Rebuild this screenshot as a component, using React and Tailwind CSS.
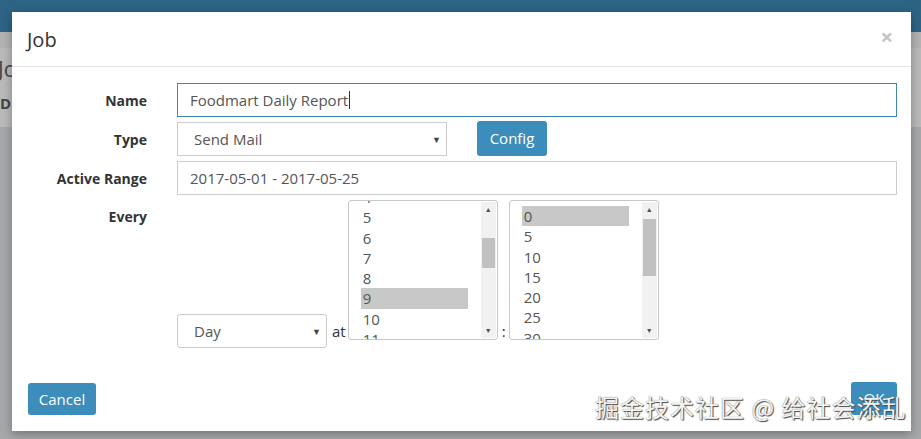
import React from 'react';

const hours = ['4', '5', '6', '7', '8', '9', '10', '11'];
const minutes = ['0', '5', '10', '15', '20', '25', '30'];

function Caret() {
    return <span className="text-[9px] text-[#444] leading-none">▼</span>;
}

function ListBox({ items, selected, offset, thumbTop, thumbHeight }) {
    return (
        <div className="relative w-[150px] h-[140px] border border-[#c8c8c8] rounded-[3px] bg-white overflow-hidden">
            <div className="absolute left-[12px] w-[107px]" style={{ top: offset }}>
                {items.map(item => (
                    <div key={item} className={`h-[20.3px] leading-[20px] pl-[2px] text-[15px] text-[#555] ${item === selected ? 'bg-[#c8c8c8]' : ''}`}>
                        {item}
                    </div>
                ))}
            </div>
            {/* scrollbar */}
            <div className="absolute right-[1px] top-[1px] bottom-[1px] w-[15px] bg-[#f1f1f1] flex flex-col items-center">
                <span className="text-[7px] text-[#505050] leading-none mt-[4px]">▲</span>
                <div className="absolute left-[1px] w-[13px] bg-[#c1c1c1]" style={{ top: thumbTop, height: thumbHeight }} />
                <span className="absolute bottom-[4px] text-[7px] text-[#505050] leading-none">▼</span>
            </div>
        </div>
    );
}

export default function App() {
    return (
        <div className="relative w-[921px] h-[439px] overflow-hidden bg-[#a6a7a9]" style={{ fontFamily: '"Open Sans", "Noto Sans", sans-serif' }}>
            {/* page behind the modal */}
            <div className="h-[32px] bg-[#2d6484]" />
            <div className="h-[16px] bg-[#b2b2b2]" />
            <div className="h-[79px] bg-[#b9b9b9] text-[#444]">
                <div className="text-[21px] leading-none pt-[11px] -ml-[2px]">Jo</div>
                <div className="text-[15px] font-bold leading-none mt-[16px]">D</div>
            </div>

            {/* modal */}
            <div className="absolute left-[12px] top-[12px] w-[899px] h-[419px] bg-white shadow-[0_3px_9px_rgba(0,0,0,0.3)] flex flex-col">
                <div className="h-[55px] border-b border-[#e5e5e5] flex items-center justify-between px-[15px]">
                    <h4 className="text-[20px] text-[#333] leading-none mt-[1px]">Job</h4>
                    <span className="text-[22px] font-bold text-[#c4c4c4] leading-none mr-[3px] -mt-[6px]">×</span>
                </div>

                <div className="pt-[16px] pr-[14px] flex flex-col gap-[5px] text-[#333]">
                    <div className="flex items-center">
                        <label className="w-[135px] text-right font-bold text-[14px]">Name</label>
                        <div className="ml-[30px] flex-1 h-[34px] border border-[#3f87ad] flex items-center px-[12px] text-[15px] text-[#555]">
                            Foodmart Daily Report<span className="w-px h-[18px] bg-[#333] ml-[1px]" />
                        </div>
                    </div>
                    <div className="flex items-center">
                        <label className="w-[135px] text-right font-bold text-[14px]">Type</label>
                        <div className="ml-[30px] w-[270px] h-[34px] border border-[#ccc] flex items-center justify-between pl-[16px] pr-[5px] text-[15px] text-[#555]">
                            <span>Send Mail</span>
                            <Caret />
                        </div>
                        <button className="ml-[30px] w-[70px] h-[35px] -mt-[1px] rounded-[3px] bg-[#3c8dbc] text-white text-[15px]">Config</button>
                    </div>
                    <div className="flex items-center">
                        <label className="w-[135px] text-right font-bold text-[14px]">Active Range</label>
                        <div className="ml-[30px] flex-1 h-[34px] border border-[#ccc] flex items-center px-[12px] text-[15px] text-[#555]">
                            2017-05-01 - 2017-05-25
                        </div>
                    </div>
                    <div className="flex items-start">
                        <label className="w-[135px] text-right font-bold text-[14px] mt-[6px]">Every</label>
                        <div className="ml-[30px] w-[150px] h-[34px] mt-[114px] border border-[#ccc] rounded-[3px] flex items-center justify-between pl-[16px] pr-[5px] text-[15px] text-[#555]">
                            <span>Day</span>
                            <Caret />
                        </div>
                        <span className="mt-[120px] ml-[5px] mr-[2px] text-[15px] text-[#333]">at</span>
                        <ListBox items={hours} selected="9" offset={-14} thumbTop={36} thumbHeight={30} />
                        <span className="mt-[120px] ml-[4px] mr-[3px] text-[15px] text-[#333]">:</span>
                        <ListBox items={minutes} selected="0" offset={5} thumbTop={17} thumbHeight={57} />
                    </div>
                </div>

                <div className="mt-auto mb-[16px] pl-[16px] pr-[14px] flex justify-between items-end">
                    <button className="w-[68px] h-[32px] rounded-[3px] bg-[#3c8dbc] text-white text-[15px]">Cancel</button>
                    <button className="w-[46px] h-[33px] rounded-[3px] bg-[#3c8dbc] text-white text-[15px]">OK</button>
                </div>
            </div>

            {/* watermark */}
            <div className="absolute left-[595px] top-[395px] text-[24px] leading-none text-[#f4f4f4] tracking-[1px] [text-shadow:0_0_1px_#555,1px_1px_1px_#444]" style={{ fontFamily: '"Noto Sans CJK SC", sans-serif' }}>
                掘金技术社区 @ 给社会添乱
            </div>
        </div>
    );
}
